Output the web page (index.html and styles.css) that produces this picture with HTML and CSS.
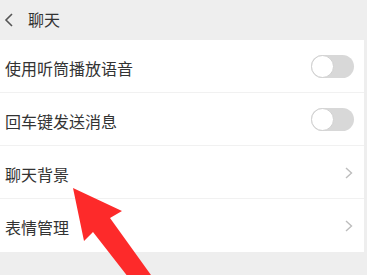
FILE: index.html
```html
<!DOCTYPE html>
<html lang="zh">
<head>
<meta charset="utf-8">
<link rel="stylesheet" href="styles.css">
</head>
<body>
<div class="page">
  <header class="topbar">
    <svg class="back" width="10" height="14" viewBox="0 0 10 14"><path d="M8 1 L2 7 L8 13" fill="none" stroke="#555" stroke-width="1.6"/></svg>
    <span class="title">聊天</span>
  </header>
  <ul class="list">
    <li class="row"><span class="label">使用听筒播放语音</span><span class="toggle"><span class="knob"></span></span></li>
    <li class="row"><span class="label">回车键发送消息</span><span class="toggle"><span class="knob"></span></span></li>
    <li class="row"><span class="label">聊天背景</span><svg class="chev" width="8" height="12" viewBox="0 0 8 12"><path d="M1 1 L6.5 6 L1 11" fill="none" stroke="#bdbdbd" stroke-width="1.4"/></svg></li>
    <li class="row"><span class="label">表情管理</span><svg class="chev" width="8" height="12" viewBox="0 0 8 12"><path d="M1 1 L6.5 6 L1 11" fill="none" stroke="#bdbdbd" stroke-width="1.4"/></svg></li>
  </ul>
  <svg class="arrow" width="367" height="275" viewBox="0 0 367 275"><polygon points="73,188 122,211 110,218 156,282 132,282 93,232 84,241" fill="#fd2a2a"/></svg>
</div>
</body>
</html>
```
FILE: styles.css
```css
html, body {
  margin: 0;
  padding: 0;
  background: #eeeeee;
  width: 367px;
  height: 275px;
  overflow: hidden;
  font-family: "Noto Sans CJK SC", "Noto Sans", sans-serif;
}
.page {
  position: relative;
  width: 367px;
  height: 275px;
}
.topbar {
  height: 40px;
  display: flex;
  align-items: center;
  padding-left: 4px;
  box-sizing: border-box;
}
.back {
  display: block;
  margin-top: -1px;
}
.title {
  margin-left: 14px;
  font-size: 16px;
  color: #333;
  line-height: 1;
  margin-top: -2px;
}
.list {
  list-style: none;
  margin: 0 3px 0 0;
  padding: 0;
  background: #fff;
}
.row {
  height: 52px;
  border-bottom: 1px solid #f1f1f1;
  display: flex;
  align-items: center;
  justify-content: space-between;
  padding: 0 10px 0 5px;
}
.row:last-child {
  border-bottom: none;
  height: 53px;
}
.label {
  font-size: 16px;
  color: #333;
  line-height: 1;
  margin-top: 3px;
}
.toggle {
  width: 43px;
  height: 23px;
  border-radius: 12px;
  background: #d8d8d8;
  position: relative;
  box-sizing: border-box;
  margin-top: 1px;
}
.knob {
  position: absolute;
  left: 0;
  top: 0;
  width: 23px;
  height: 23px;
  border-radius: 50%;
  background: #fff;
  border: 1px solid #d0d0d0;
  box-sizing: border-box;
}
.chev {
  display: block;
  margin-right: 1px;
  margin-top: 1px;
}
.arrow {
  position: absolute;
  left: 0;
  top: 0;
}
```
